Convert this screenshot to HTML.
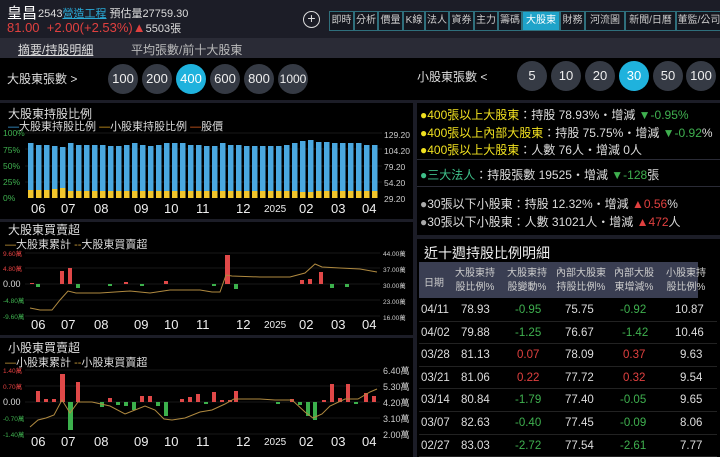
<!DOCTYPE html><html><head><meta charset="utf-8"><style>
*{margin:0;padding:0;box-sizing:border-box}
body{width:720px;height:457px;background:#000;color:#ddd;font-family:"Liberation Sans","Noto Sans CJK TC",sans-serif;overflow:hidden;position:relative}
.a{position:absolute;white-space:nowrap}
.tab{position:absolute;top:11px;height:20px;border:1px solid #2f6f7c;font-size:10px;line-height:18px;text-align:center;color:#ccc;background:#14161e}
.c{position:absolute;width:30px;height:30px;border-radius:50%;background:#353a44;color:#eee;font-size:13px;line-height:30px;text-align:center}
.on{background:#1fb2dd;color:#fff}
.g{color:#3fb04f}.r{color:#e0403f}.y{color:#f0e020}
</style></head><body>
<div class="a" style="left:0;top:0;width:720px;height:38px;background:#1c1d27"></div>
<div class="a" style="left:0;top:38px;width:720px;height:20px;background:#2a2b36"></div>
<div class="a" style="left:7px;top:2px;font-size:15px;color:#fff">皇昌</div>
<div class="a" style="left:38px;top:5px;font-size:11px;color:#ddd">2543<span style="color:#2aa9d6;text-decoration:underline">營造工程</span> 預估量27759.30</div>
<div class="a" style="left:7px;top:20px;font-size:13px;color:#e0403f">81.00 &nbsp;+2.00(+2.53%)▲<span style="color:#ddd;font-size:11px">5503張</span></div>
<div class="a" style="left:303px;top:11px;width:17px;height:17px;border:1.5px solid #ddd;border-radius:50%;color:#ddd;font-size:14px;line-height:13px;text-align:center">+</div>
<div class="tab" style="left:329px;width:25px">即時</div>
<div class="tab" style="left:354px;width:24px">分析</div>
<div class="tab" style="left:378px;width:25px">價量</div>
<div class="tab" style="left:403px;width:22px">K線</div>
<div class="tab" style="left:425px;width:24px">法人</div>
<div class="tab" style="left:449px;width:25px">資券</div>
<div class="tab" style="left:474px;width:24px">主力</div>
<div class="tab" style="left:498px;width:24px">籌碼</div>
<div class="tab" style="left:522px;width:38px;background:#1fa3c9;color:#fff">大股東</div>
<div class="tab" style="left:560px;width:25px">財務</div>
<div class="tab" style="left:585px;width:40px">河流圖</div>
<div class="tab" style="left:625px;width:51px">新聞/日曆</div>
<div class="tab" style="left:676px;width:46px">董監/公司</div>
<div class="a" style="left:18px;top:41px;font-size:12px;color:#ddd;text-decoration:underline">摘要/持股明細</div>
<div class="a" style="left:131px;top:41px;font-size:12px;color:#bbb">平均張數/前十大股東</div>
<div class="a" style="left:7px;top:70px;font-size:12px;color:#ddd">大股東張數 &gt;</div>
<div class="c" style="left:108px;top:64px">100</div><div class="c" style="left:142px;top:64px">200</div><div class="c on" style="left:176px;top:64px">400</div><div class="c" style="left:210px;top:64px">600</div><div class="c" style="left:244px;top:64px">800</div><div class="c" style="left:278px;top:64px;font-size:12px">1000</div>
<div class="a" style="left:417px;top:68px;font-size:12px;color:#ddd">小股東張數 &lt;</div>
<div class="c" style="left:517px;top:61px">5</div><div class="c" style="left:551px;top:61px">10</div><div class="c" style="left:585px;top:61px">20</div><div class="c on" style="left:619px;top:61px">30</div><div class="c" style="left:653px;top:61px">50</div><div class="c" style="left:686px;top:61px">100</div>
<div class="a" style="left:0;top:100px;width:720px;height:3px;background:#1c1d27"></div>
<div class="a" style="left:413px;top:100px;width:4px;height:357px;background:#1c1d27"></div>
<div class="a" style="left:0;top:219px;width:413px;height:3px;background:#1c1d27"></div>
<div class="a" style="left:0;top:335px;width:413px;height:3px;background:#1c1d27"></div>
<div class="a" style="left:417px;top:159px;width:303px;height:1px;background:#2a2b36"></div>
<div class="a" style="left:417px;top:186px;width:303px;height:1px;background:#2a2b36"></div>
<div class="a" style="left:417px;top:235px;width:303px;height:4px;background:#1c1d27"></div>
<svg class="a" style="left:0;top:0" width="413" height="457" font-family="Liberation Sans,Noto Sans CJK TC,sans-serif">
<text x="8" y="118" fill="#ddd" font-size="12">大股東持股比例</text>
<text x="8" y="130" font-size="11" fill="#ddd"><tspan fill="#3aa0e0">—</tspan>大股東持股比例 <tspan fill="#d9a020">—</tspan>小股東持股比例 <tspan fill="#e06020">—</tspan>股價</text>
<g stroke="#333" stroke-width="0.5"><line x1="25" y1="133" x2="382" y2="133"/><line x1="25" y1="149" x2="382" y2="149"/><line x1="25" y1="166" x2="382" y2="166"/><line x1="25" y1="182" x2="382" y2="182"/></g>
<g font-size="8.5" fill="#3fb04f"><text x="3" y="136">100%</text><text x="3" y="153">75%</text><text x="3" y="169">50%</text><text x="3" y="185">25%</text><text x="3" y="201">0%</text></g>
<g font-size="8.5" fill="#ccc"><text x="384" y="138">129.20</text><text x="384" y="154">104.20</text><text x="384" y="170">79.20</text><text x="384" y="186">54.20</text><text x="384" y="202">29.20</text></g>
<g fill="#4aa8e0">
<rect x="28" y="143" width="5.5" height="55"/><rect x="36" y="145" width="5.5" height="53"/><rect x="44" y="145" width="5.5" height="53"/><rect x="52" y="146" width="5.5" height="52"/><rect x="60" y="147" width="5.5" height="51"/><rect x="68" y="143" width="5.5" height="55"/><rect x="76" y="145" width="5.5" height="53"/><rect x="84" y="145" width="5.5" height="53"/><rect x="92" y="145" width="5.5" height="53"/><rect x="100" y="145" width="5.5" height="53"/><rect x="108" y="146" width="5.5" height="52"/><rect x="116" y="146" width="5.5" height="52"/><rect x="124" y="145" width="5.5" height="53"/><rect x="132" y="143" width="5.5" height="55"/><rect x="140" y="145" width="5.5" height="53"/><rect x="148" y="146" width="5.5" height="52"/><rect x="156" y="145" width="5.5" height="53"/><rect x="164" y="143" width="5.5" height="55"/><rect x="172" y="143" width="5.5" height="55"/><rect x="180" y="143" width="5.5" height="55"/><rect x="188" y="145" width="5.5" height="53"/><rect x="196" y="145" width="5.5" height="53"/><rect x="204" y="146" width="5.5" height="52"/><rect x="212" y="146" width="5.5" height="52"/><rect x="220" y="143" width="5.5" height="55"/><rect x="228" y="145" width="5.5" height="53"/><rect x="236" y="145" width="5.5" height="53"/><rect x="244" y="146" width="5.5" height="52"/><rect x="252" y="146" width="5.5" height="52"/><rect x="260" y="146" width="5.5" height="52"/><rect x="268" y="146" width="5.5" height="52"/><rect x="276" y="146" width="5.5" height="52"/><rect x="284" y="145" width="5.5" height="53"/><rect x="292" y="143" width="5.5" height="55"/><rect x="300" y="141" width="5.5" height="57"/><rect x="308" y="140" width="5.5" height="58"/><rect x="316" y="142" width="5.5" height="56"/><rect x="324" y="142" width="5.5" height="56"/><rect x="332" y="143" width="5.5" height="55"/><rect x="340" y="143" width="5.5" height="55"/><rect x="348" y="143" width="5.5" height="55"/><rect x="356" y="143" width="5.5" height="55"/><rect x="364" y="145" width="5.5" height="53"/><rect x="372" y="145" width="5.5" height="53"/>
</g>
<g fill="#f2c62c">
<rect x="28" y="190" width="5.5" height="8"/><rect x="36" y="190" width="5.5" height="8"/><rect x="44" y="190" width="5.5" height="8"/><rect x="52" y="189" width="5.5" height="9"/><rect x="60" y="188" width="5.5" height="10"/><rect x="68" y="191" width="5.5" height="7"/><rect x="76" y="191" width="5.5" height="7"/><rect x="84" y="191" width="5.5" height="7"/><rect x="92" y="191" width="5.5" height="7"/><rect x="100" y="191" width="5.5" height="7"/><rect x="108" y="191" width="5.5" height="7"/><rect x="116" y="191" width="5.5" height="7"/><rect x="124" y="191" width="5.5" height="7"/><rect x="132" y="191" width="5.5" height="7"/><rect x="140" y="191" width="5.5" height="7"/><rect x="148" y="191" width="5.5" height="7"/><rect x="156" y="191" width="5.5" height="7"/><rect x="164" y="191" width="5.5" height="7"/><rect x="172" y="191" width="5.5" height="7"/><rect x="180" y="191" width="5.5" height="7"/><rect x="188" y="191" width="5.5" height="7"/><rect x="196" y="191" width="5.5" height="7"/><rect x="204" y="191" width="5.5" height="7"/><rect x="212" y="191" width="5.5" height="7"/><rect x="220" y="191" width="5.5" height="7"/><rect x="228" y="191" width="5.5" height="7"/><rect x="236" y="191" width="5.5" height="7"/><rect x="244" y="191" width="5.5" height="7"/><rect x="252" y="191" width="5.5" height="7"/><rect x="260" y="191" width="5.5" height="7"/><rect x="268" y="191" width="5.5" height="7"/><rect x="276" y="191" width="5.5" height="7"/><rect x="284" y="191" width="5.5" height="7"/><rect x="292" y="191" width="5.5" height="7"/><rect x="300" y="192" width="5.5" height="6"/><rect x="308" y="192" width="5.5" height="6"/><rect x="316" y="191" width="5.5" height="7"/><rect x="324" y="191" width="5.5" height="7"/><rect x="332" y="191" width="5.5" height="7"/><rect x="340" y="191" width="5.5" height="7"/><rect x="348" y="191" width="5.5" height="7"/><rect x="356" y="191" width="5.5" height="7"/><rect x="364" y="191" width="5.5" height="7"/><rect x="372" y="191" width="5.5" height="7"/>
</g>
<g font-size="13" fill="#eee"><text x="31" y="213">06</text><text x="61" y="213">07</text><text x="94" y="213">08</text><text x="134" y="213">09</text><text x="164" y="213">10</text><text x="196" y="213">11</text><text x="236" y="213">12</text><text x="264" y="212" font-size="10">2025</text><text x="299" y="213">02</text><text x="331" y="213">03</text><text x="362" y="213">04</text></g>
<text x="8" y="234" fill="#ddd" font-size="12">大股東買賣超</text>
<text x="5" y="248" font-size="11" fill="#ddd"><tspan fill="#c99a3a">—</tspan>大股東累計 <tspan fill="#c99a3a">--</tspan>大股東買賣超</text>
<g stroke="#333" stroke-width="0.5"><line x1="25" y1="253" x2="380" y2="253"/><line x1="25" y1="268" x2="380" y2="268"/><line x1="25" y1="284" x2="380" y2="284"/><line x1="25" y1="300" x2="380" y2="300"/><line x1="25" y1="316" x2="380" y2="316"/></g>
<g font-size="6.5"><text x="3" y="256" fill="#e04040">9.60萬</text><text x="3" y="271" fill="#e04040">4.80萬</text><text x="3" y="287" fill="#ddd" font-size="9">0.00</text><text x="3" y="303" fill="#3fb04f">-4.80萬</text><text x="3" y="319" fill="#3fb04f">-9.60萬</text></g>
<g font-size="6.5" fill="#ccc"><text x="383" y="256">44.00萬</text><text x="383" y="272">37.00萬</text><text x="383" y="288">30.00萬</text><text x="383" y="304">23.00萬</text><text x="383" y="320">16.00萬</text></g>
<g fill="#e04848"><rect x="30" y="283" width="4" height="1"/><rect x="60" y="271" width="4" height="13"/><rect x="68" y="268" width="4" height="16"/><rect x="124" y="282" width="4" height="2"/><rect x="164" y="281" width="4" height="3"/><rect x="225" y="255" width="5" height="29"/><rect x="300" y="280" width="4" height="4"/><rect x="308" y="279" width="4" height="5"/><rect x="319" y="272" width="4" height="12"/></g>
<g fill="#3cb04c"><rect x="36" y="284" width="4" height="3"/><rect x="76" y="284" width="4" height="4"/><rect x="108" y="284" width="4" height="2"/><rect x="140" y="284" width="4" height="2"/><rect x="212" y="284" width="4" height="2"/><rect x="234" y="284" width="4" height="5"/><rect x="330" y="284" width="4" height="4"/><rect x="345" y="284" width="4" height="3"/></g>
<polyline fill="none" stroke="#b08a40" stroke-width="1" points="30,308 40,310 52,310 60,300 68,291 76,293 100,293 130,291 150,293 170,290 200,290 212,292 220,292 226,275 232,276 260,277 290,277 305,273 315,264 322,267 340,268 360,269 377,272"/>
<g font-size="13" fill="#eee"><text x="31" y="329">06</text><text x="61" y="329">07</text><text x="94" y="329">08</text><text x="134" y="329">09</text><text x="164" y="329">10</text><text x="196" y="329">11</text><text x="236" y="329">12</text><text x="264" y="328" font-size="10">2025</text><text x="299" y="329">02</text><text x="331" y="329">03</text><text x="362" y="329">04</text></g>
<text x="8" y="352" fill="#ddd" font-size="12">小股東買賣超</text>
<text x="5" y="366" font-size="11" fill="#ddd"><tspan fill="#c99a3a">—</tspan>小股東累計 <tspan fill="#c99a3a">--</tspan>小股東買賣超</text>
<g stroke="#333" stroke-width="0.5"><line x1="25" y1="370" x2="380" y2="370"/><line x1="25" y1="386" x2="380" y2="386"/><line x1="25" y1="402" x2="380" y2="402"/><line x1="25" y1="418" x2="380" y2="418"/><line x1="25" y1="434" x2="380" y2="434"/></g>
<g font-size="6.5"><text x="3" y="373" fill="#e04040">1.40萬</text><text x="3" y="389" fill="#e04040">0.70萬</text><text x="3" y="405" fill="#ddd" font-size="9">0.00</text><text x="3" y="421" fill="#3fb04f">-0.70萬</text><text x="3" y="437" fill="#3fb04f">-1.40萬</text></g>
<g font-size="9" fill="#ccc"><text x="383" y="374">6.40萬</text><text x="383" y="390">5.30萬</text><text x="383" y="406">4.20萬</text><text x="383" y="422">3.10萬</text><text x="383" y="438">2.00萬</text></g>
<g fill="#e04848"><rect x="36" y="391" width="4" height="11"/><rect x="44" y="399" width="4" height="3"/><rect x="52" y="399" width="4" height="3"/><rect x="60" y="374" width="5" height="28"/><rect x="76" y="382" width="4" height="20"/><rect x="108" y="398" width="4" height="4"/><rect x="140" y="396" width="4" height="6"/><rect x="148" y="396" width="4" height="6"/><rect x="180" y="399" width="4" height="3"/><rect x="188" y="397" width="4" height="5"/><rect x="196" y="394" width="4" height="8"/><rect x="212" y="392" width="4" height="10"/><rect x="220" y="400" width="4" height="2"/><rect x="228" y="400" width="4" height="2"/><rect x="234" y="391" width="4" height="11"/><rect x="290" y="399" width="4" height="3"/><rect x="322" y="400" width="4" height="2"/><rect x="330" y="384" width="4" height="18"/><rect x="338" y="398" width="4" height="4"/><rect x="346" y="384" width="4" height="18"/><rect x="364" y="393" width="4" height="9"/><rect x="372" y="396" width="4" height="6"/></g>
<g fill="#3cb04c"><rect x="68" y="402" width="5" height="28"/><rect x="100" y="402" width="4" height="5"/><rect x="116" y="402" width="4" height="3"/><rect x="124" y="402" width="4" height="4"/><rect x="132" y="402" width="4" height="8"/><rect x="156" y="402" width="4" height="4"/><rect x="164" y="402" width="4" height="14"/><rect x="204" y="402" width="4" height="2"/><rect x="276" y="402" width="4" height="2"/><rect x="298" y="402" width="4" height="3"/><rect x="306" y="402" width="4" height="14"/><rect x="313" y="402" width="4" height="18"/><rect x="354" y="402" width="4" height="2"/></g>
<polyline fill="none" stroke="#b08a40" stroke-width="1" points="30,427 38,420 46,418 54,415 62,400 70,413 78,402 92,402 110,406 125,414 135,410 145,406 155,410 164,419 172,420 185,418 200,412 212,410 225,404 234,399 260,399 275,400 292,400 305,412 313,418 322,414 330,406 345,399 358,399 370,392 377,389"/>
<g font-size="13" fill="#eee"><text x="31" y="446">06</text><text x="61" y="446">07</text><text x="94" y="446">08</text><text x="134" y="446">09</text><text x="164" y="446">10</text><text x="196" y="446">11</text><text x="236" y="446">12</text><text x="264" y="445" font-size="10">2025</text><text x="299" y="446">02</text><text x="331" y="446">03</text><text x="362" y="446">04</text></g>
</svg>
<div class="a" style="left:420px;top:107px;font-size:12px;line-height:17.7px;color:#ddd">
<div><span class="y">●400張以上大股東</span>：持股 78.93%・增減 <span class="g">▼-0.95%</span></div>
<div><span class="y">●400張以上內部大股東</span>：持股 75.75%・增減 <span class="g">▼-0.92</span>%</div>
<div><span class="y">●400張以上大股東</span>：人數 76人・增減 0人</div>
</div>
<div class="a" style="left:420px;top:166px;font-size:12px;color:#ddd"><span style="color:#3fc08a">●三大法人</span>：持股張數 19525・增減 <span class="g">▼-128</span>張</div>
<div class="a" style="left:420px;top:196px;font-size:12px;line-height:17.7px;color:#ddd">
<div><span style="color:#aaa">●</span>30張以下小股東：持股 12.32%・增減 <span class="r">▲0.56</span>%</div>
<div><span style="color:#aaa">●</span>30張以下小股東：人數 31021人・增減 <span class="r">▲472</span>人</div>
</div>
<div class="a" style="left:424px;top:243px;font-size:14px;color:#eee">近十週持股比例明細</div>
<div class="a" style="left:419px;top:262px;width:279px;height:36px;background:#3a3e52"></div>
<div class="a" style="left:424px;top:274px;font-size:10px;color:#ccc">日期</div>
<div class="a" style="left:455px;top:267px;font-size:10px;line-height:14px;color:#ccc;text-align:center">大股東持<br>股比例%</div>
<div class="a" style="left:507px;top:267px;font-size:10px;line-height:14px;color:#ccc;text-align:center">大股東持<br>股變動%</div>
<div class="a" style="left:556px;top:267px;font-size:10px;line-height:14px;color:#ccc;text-align:center">內部大股東<br>持股比例%</div>
<div class="a" style="left:614px;top:267px;font-size:10px;line-height:14px;color:#ccc;text-align:center">內部大股<br>東增減%</div>
<div class="a" style="left:666px;top:267px;font-size:10px;line-height:14px;color:#ccc;text-align:center">小股東持<br>股比例%</div>
<div class="a" style="left:419px;top:299px;width:298px;font-size:11.5px;color:#ddd">
<style>.row{height:22.6px;line-height:22px;border-bottom:1px solid #222;position:relative}.row span{position:absolute;text-align:center}</style>
<div class="row"><span style="left:2px">04/11</span><span style="left:42px">78.93</span><span class="g" style="left:96px">-0.95</span><span style="left:146px">75.75</span><span class="g" style="left:201px">-0.92</span><span style="left:256px">10.87</span></div>
<div class="row"><span style="left:2px">04/02</span><span style="left:42px">79.88</span><span class="g" style="left:96px">-1.25</span><span style="left:146px">76.67</span><span class="g" style="left:203px">-1.42</span><span style="left:256px">10.46</span></div>
<div class="row"><span style="left:2px">03/28</span><span style="left:42px">81.13</span><span class="r" style="left:98px">0.07</span><span style="left:146px">78.09</span><span class="r" style="left:204px">0.37</span><span style="left:261px">9.63</span></div>
<div class="row"><span style="left:2px">03/21</span><span style="left:42px">81.06</span><span class="r" style="left:98px">0.22</span><span style="left:146px">77.72</span><span class="r" style="left:204px">0.32</span><span style="left:261px">9.54</span></div>
<div class="row"><span style="left:2px">03/14</span><span style="left:42px">80.84</span><span class="g" style="left:96px">-1.79</span><span style="left:146px">77.40</span><span class="g" style="left:201px">-0.05</span><span style="left:261px">9.65</span></div>
<div class="row"><span style="left:2px">03/07</span><span style="left:42px">82.63</span><span class="g" style="left:96px">-0.40</span><span style="left:146px">77.45</span><span class="g" style="left:201px">-0.09</span><span style="left:261px">8.06</span></div>
<div class="row"><span style="left:2px">02/27</span><span style="left:42px">83.03</span><span class="g" style="left:96px">-2.72</span><span style="left:146px">77.54</span><span class="g" style="left:201px">-2.61</span><span style="left:261px">7.77</span></div>
</div>
</body></html>
